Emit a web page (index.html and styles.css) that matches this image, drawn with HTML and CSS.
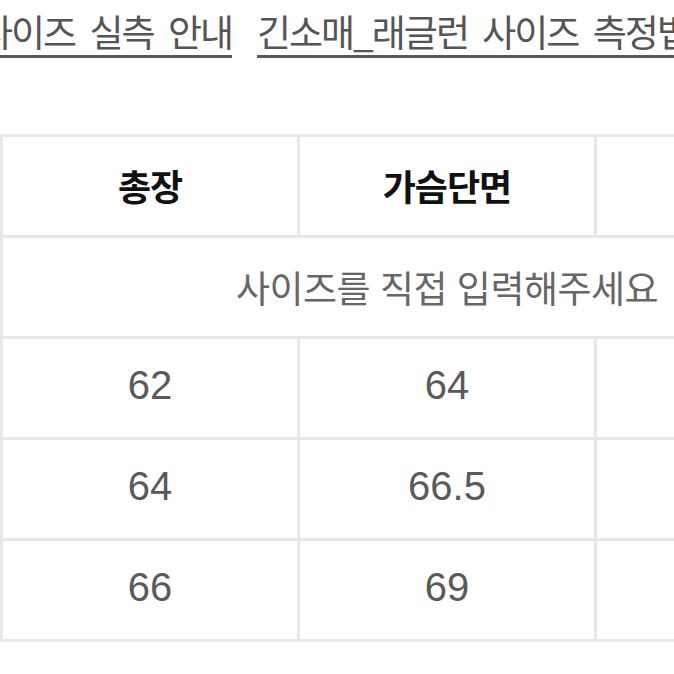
FILE: index.html
```html
<!DOCTYPE html>
<html lang="ko">
<head>
<meta charset="utf-8">
<link rel="stylesheet" href="styles.css">
</head>
<body>
<div class="page">
  <div class="links">
    <a class="link first" href="#">사이즈 실측 안내</a>
    <a class="link" href="#">긴소매_래글런 사이즈 측정법</a>
  </div>
  <div class="size-table">
    <div class="cell head">총장</div>
    <div class="cell head">가슴단면</div>
    <div class="cell head">어깨너비</div>
    <div class="cell note">사이즈를 직접 입력해주세요</div>
    <div class="cell num">62</div>
    <div class="cell num">64</div>
    <div class="cell num">50</div>
    <div class="cell num">64</div>
    <div class="cell num">66.5</div>
    <div class="cell num">52</div>
    <div class="cell num">66</div>
    <div class="cell num">69</div>
    <div class="cell num">54</div>
  </div>
</div>
</body>
</html>
```

FILE: styles.css
```css
html, body {
  margin: 0;
  padding: 0;
  background: #ffffff;
  overflow: hidden;
}

.page {
  width: 674px;
  height: 674px;
  overflow: hidden;
  font-family: "Noto Sans CJK KR", "Noto Sans", sans-serif;
}

.links {
  display: flex;
  gap: 25px;
  white-space: nowrap;
  margin-left: -21px;
  padding-top: 7px;
  height: 134px;
  box-sizing: border-box;
}

.link {
  color: #555555;
  font-size: 37px;
  line-height: 48px;
  letter-spacing: -2px;
  word-spacing: 6px;
  text-decoration: underline;
  text-decoration-thickness: 3px;
  text-underline-offset: 8px;
  text-decoration-color: #5a5a5a;
}

.size-table {
  display: grid;
  grid-template-columns: repeat(3, 294px);
  grid-auto-rows: 98px;
  gap: 3px;
  padding: 3px;
  background: #e8e8e8;
  width: max-content;
}

.cell {
  background: #ffffff;
  display: flex;
  align-items: center;
  justify-content: center;
}

.head {
  color: #111111;
  font-size: 36px;
  font-weight: 700;
  letter-spacing: -1px;
  padding-bottom: 2px;
}

.note {
  grid-column: 1 / span 3;
  color: #666666;
  font-size: 37px;
  letter-spacing: -0.5px;
}

.num {
  color: #5a5a5a;
  font-family: "Liberation Sans", Arial, sans-serif;
  font-size: 40px;
  padding-bottom: 5px;
}
```
